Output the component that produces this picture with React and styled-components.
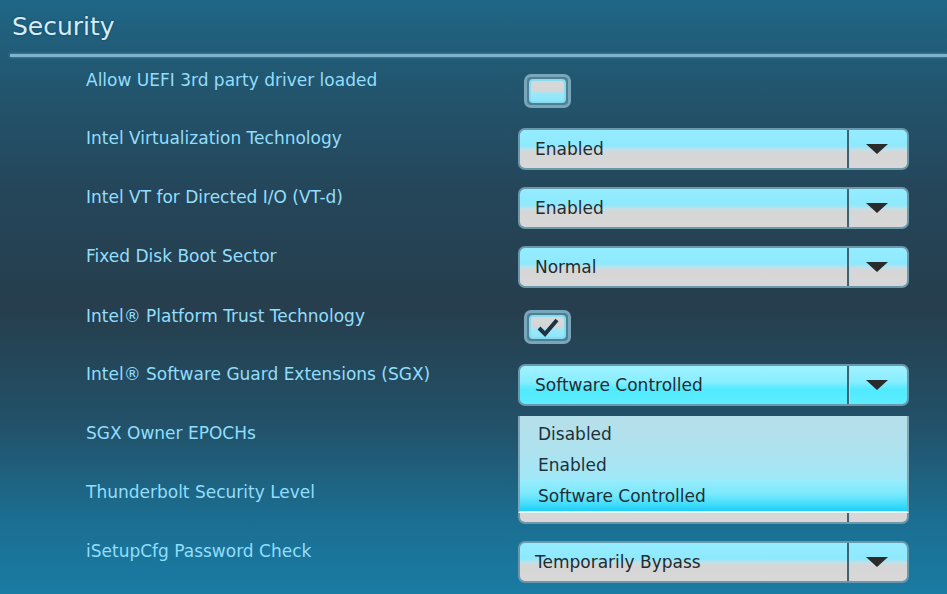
import React from "react";
import styled, { createGlobalStyle, css } from "styled-components";

const GlobalStyle = createGlobalStyle`
  html, body {
    margin: 0;
    padding: 0;
  }
  body {
    font-family: "DejaVu Sans", "Liberation Sans", sans-serif;
  }
`;

// STYLING
const Screen = styled.div`
  width: 947px;
  height: 594px;
  overflow: hidden;
  background: linear-gradient(
    180deg,
    #1f6686 0%,
    #22566f 14%,
    #25465a 32%,
    #263e4d 52%,
    #22526a 72%,
    #1b6f93 88%,
    #1a7ba3 100%
  );
`;

const Header = styled.div`
  padding: 11px 0 0 12px;
  height: 51px;
  box-sizing: border-box;
`;

const Title = styled.h1`
  margin: 0;
  font-size: 25px;
  font-weight: normal;
  line-height: 32px;
  color: #d3eef6;
  text-shadow: 0 0 2px rgba(0, 20, 40, 0.5);
`;

const Divider = styled.div`
  margin: 3px 0 0 10px;
  height: 3px;
  background: #7cb4cc;
  box-shadow: 0 0 3px rgba(140, 200, 225, 0.6);
`;

const List = styled.div`
  padding-top: 12px;
  display: flex;
  flex-direction: column;
`;

const Row = styled.div`
  height: 59px;
  display: grid;
  grid-template-columns: 432px 391px;
  padding-left: 86px;
  position: relative;
`;

const Label = styled.div`
  font-size: 17px;
  line-height: 20px;
  color: #92defc;
  margin-top: ${(p) => (p.$check ? "1px" : "0")};
`;

const Control = styled.div`
  position: relative;
`;

const CheckBox = styled.div`
  margin: 5px 0 0 6px;
  width: 47px;
  height: 34px;
  box-sizing: border-box;
  border: 3px solid #78a7bb;
  border-radius: 7px;
  background: #4f7f93;
  padding: 2px;
`;

const CheckInner = styled.div`
  height: 100%;
  box-sizing: border-box;
  border: 2px solid #88dcef;
  border-radius: 4px;
  background: linear-gradient(180deg, #d8d8d8 0%, #d4d6d7 50%, #9be9fb 62%, #8fe6fa 100%);
  display: flex;
  align-items: center;
  justify-content: center;
`;

const Select = styled.div`
  width: 391px;
  height: 42px;
  box-sizing: border-box;
  border: 2px solid #6b98ab;
  border-radius: 7px;
  display: flex;
  overflow: hidden;
  background: ${(p) =>
    p.$active
      ? "linear-gradient(180deg, #9ff2ff 0%, #8aeeff 40%, #52eaff 62%, #5ceeff 100%)"
      : "linear-gradient(180deg, #95ecff 0%, #8ee9fd 42%, #c4dfe6 52%, #d6d6d6 60%, #d8d8d8 100%)"};
`;

const SelectValue = styled.div`
  flex: 1;
  padding-left: 15px;
  font-size: 17px;
  line-height: 38px;
  color: #222b30;
`;

const ArrowBox = styled.div`
  width: 58px;
  border-left: 2px solid #3e6474;
  box-shadow: inset 1px 0 0 #b6dbe6;
  display: flex;
  align-items: center;
  justify-content: center;
`;

const Arrow = styled.div`
  width: 0;
  height: 0;
  border-left: 11px solid transparent;
  border-right: 11px solid transparent;
  border-top: 10px solid #2b2b2b;
  margin-right: 2px;
`;

const Menu = styled.div`
  position: absolute;
  top: 52px;
  left: 0;
  width: 391px;
  height: 97px;
  box-sizing: border-box;
  border-left: 2px solid #7fa6b6;
  border-right: 2px solid #7fa6b6;
  border-bottom: 2px solid #e6f6fb;
  background: linear-gradient(180deg, #b6dfea 0%, #ade2ef 40%, #9fe9fa 70%, #8fe8fb 100%);
  padding-top: 2px;
  z-index: 2;
`;

const MenuItem = styled.div`
  height: 31px;
  padding-left: 18px;
  font-size: 17px;
  line-height: 33px;
  color: #1f3037;
  ${(p) =>
    p.$selected &&
    css`
      background: linear-gradient(180deg, #98ecfc 0%, #7ae9fd 45%, #3fdcfb 80%, #1fcdf6 100%);
    `}
`;

function Check() {
  return (
    <svg width="24" height="20" viewBox="0 0 24 20">
      <path d="M3 11 L9 17 L21 3" fill="none" stroke="#1e3440" strokeWidth="4" strokeLinejoin="miter" />
    </svg>
  );
}

function Dropdown({ value, active, options, selected }) {
  return (
    <Control>
      <Select $active={active}>
        <SelectValue>{value}</SelectValue>
        <ArrowBox>
          <Arrow />
        </ArrowBox>
      </Select>
      {options && (
        <Menu>
          {options.map((o) => (
            <MenuItem key={o} $selected={o === selected}>
              {o}
            </MenuItem>
          ))}
        </Menu>
      )}
    </Control>
  );
}

const rows = [
  { label: "Allow UEFI 3rd party driver loaded", type: "check", checked: false },
  { label: "Intel Virtualization Technology", value: "Enabled" },
  { label: "Intel VT for Directed I/O (VT-d)", value: "Enabled" },
  { label: "Fixed Disk Boot Sector", value: "Normal" },
  { label: "Intel® Platform Trust Technology", type: "check", checked: true },
  {
    label: "Intel® Software Guard Extensions (SGX)",
    value: "Software Controlled",
    active: true,
    options: ["Disabled", "Enabled", "Software Controlled"],
  },
  { label: "SGX Owner EPOCHs", type: "none" },
  { label: "Thunderbolt Security Level", value: "" },
  { label: "iSetupCfg Password Check", value: "Temporarily Bypass" },
];

export default function App() {
  return (
    <>
      <GlobalStyle />
      <Screen>
        <Header>
          <Title>Security</Title>
        </Header>
        <Divider />
        <List>
          {rows.map((r) => (
            <Row key={r.label}>
              <Label $check={r.type === "check"}>{r.label}</Label>
              {r.type === "check" ? (
                <Control>
                  <CheckBox>
                    <CheckInner>{r.checked && <Check />}</CheckInner>
                  </CheckBox>
                </Control>
              ) : r.type === "none" ? (
                <Control />
              ) : (
                <Dropdown
                  value={r.value}
                  active={r.active}
                  options={r.options}
                  selected={r.value}
                />
              )}
            </Row>
          ))}
        </List>
      </Screen>
    </>
  );
}
